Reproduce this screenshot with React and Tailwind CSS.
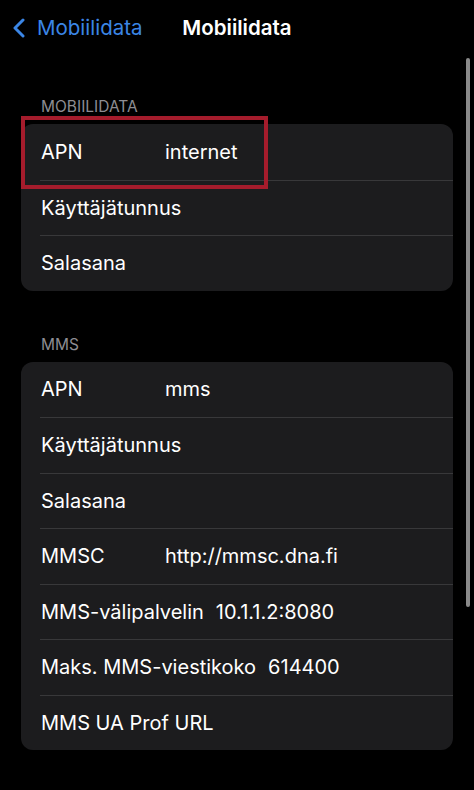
import React from 'react';

const mobileRows = [
  { label: 'APN', value: 'internet' },
  { label: 'Käyttäjätunnus', value: '' },
  { label: 'Salasana', value: '' },
];

const mmsRows = [
  { label: 'APN', value: 'mms' },
  { label: 'Käyttäjätunnus', value: '' },
  { label: 'Salasana', value: '' },
  { label: 'MMSC', value: 'http://mmsc.dna.fi' },
  { label: 'MMS-välipalvelin', value: '10.1.1.2:8080' },
  { label: 'Maks. MMS-viestikoko', value: '614400' },
  { label: 'MMS UA Prof URL', value: '' },
];

const Row = ({ row, first }) => (
  <div className="pl-[19px]">
    <div className={`h-[55.5px] flex items-center gap-[12px] ${first ? '' : 'border-t border-[#38383a]'}`}>
      <span className="min-w-[113px] pl-[1px] whitespace-nowrap">{row.label}</span>
      {row.value && <span className="whitespace-nowrap">{row.value}</span>}
    </div>
  </div>
);

const Section = ({ title, rows, children }) => (
  <div>
    <div className="px-[41px] text-[15.5px] leading-[18px] text-[#8d8d93] uppercase mb-[8px]">{title}</div>
    <div className="relative mx-[21px] bg-[#1c1c1e] rounded-[12px]">
      {rows.map((r, i) => (
        <Row key={i} row={r} first={i === 0} />
      ))}
      {children}
    </div>
  </div>
);

export default function App() {
  return (
    <div
      className="relative w-[474px] h-[790px] bg-black text-white text-[20px] overflow-hidden"
      style={{ fontFamily: 'Inter, "Noto Sans", sans-serif' }}
    >
      {/* nav bar */}
      <div className="grid grid-cols-[1fr_auto_1fr] items-center h-[56px]">
        <div className="flex items-center pl-[12px] text-[#3b86e6] text-[20.5px]">
          <svg width="14" height="20" viewBox="0 0 14 20" fill="none" className="mr-[11px]">
            <path d="M11 2 L3 10 L11 18" stroke="#3b86e6" strokeWidth="3" strokeLinecap="round" strokeLinejoin="round" />
          </svg>
          <span>Mobiilidata</span>
        </div>
        <div className="font-semibold text-[20.5px]">Mobiilidata</div>
        <div />
      </div>

      <div className="pt-[42px]">
        <Section title="Mobiilidata" rows={mobileRows}>
          <div className="absolute left-0 top-[-8px] w-[247px] h-[73px] border-[4px] border-[#a51c2c]" />
        </Section>
      </div>

      <div className="pt-[45px]">
        <Section title="MMS" rows={mmsRows} />
      </div>

      {/* scroll indicator */}
      <div className="absolute left-[466px] top-[58px] w-[4px] h-[549px] rounded-full bg-[#8a8a8a]" />
    </div>
  );
}
